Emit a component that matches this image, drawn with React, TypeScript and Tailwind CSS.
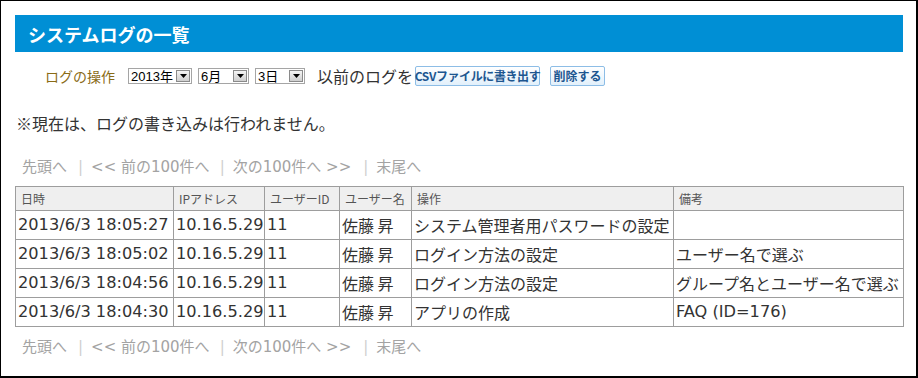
import React from "react";

const jp = { fontFamily: '"Noto Sans CJK JP", "Noto Sans", sans-serif' };
const mix = { fontFamily: '"DejaVu Sans", "Noto Sans CJK JP", sans-serif' };

function Select({ label, width }: { label: string; width: string }) {
  return (
    <div
      className={`flex h-[16px] items-center justify-between border border-[#a5a5a5] bg-white pl-[2px] pr-[1px] text-[13px] leading-none text-black ${width}`}
      style={{ fontFamily: '"Liberation Sans", "Noto Sans CJK JP", sans-serif' }}
    >
      <span>{label}</span>
      <div className="flex h-[12px] w-[14px] items-center justify-center border border-[#8a8a8a] bg-gradient-to-b from-[#f4f4f4] to-[#cfcfcf]">
        <svg width="7" height="4" viewBox="0 0 7 4">
          <polygon points="0,0 7,0 3.5,4" fill="#000" />
        </svg>
      </div>
    </div>
  );
}

function Pager() {
  return (
    <div className="flex h-[20px] items-center whitespace-pre pl-[7px] text-[15px] leading-none text-[#a3a3a3]" style={mix}>
      <span>先頭へ</span>
      <span className="ml-[11px] mr-[8px] text-[#cfcfcf]">|</span>
      <span>&lt;&lt; 前の100件へ</span>
      <span className="ml-[10px] mr-[8px] text-[#cfcfcf]">|</span>
      <span>次の100件へ &gt;&gt;</span>
      <span className="ml-[12px] mr-[8px] text-[#cfcfcf]">|</span>
      <span>末尾へ</span>
    </div>
  );
}

const rows = [
  ["2013/6/3 18:05:27", "10.16.5.29", "11", "佐藤 昇", "システム管理者用パスワードの設定", ""],
  ["2013/6/3 18:05:02", "10.16.5.29", "11", "佐藤 昇", "ログイン方法の設定", "ユーザー名で選ぶ"],
  ["2013/6/3 18:04:56", "10.16.5.29", "11", "佐藤 昇", "ログイン方法の設定", "グループ名とユーザー名で選ぶ"],
  ["2013/6/3 18:04:30", "10.16.5.29", "11", "佐藤 昇", "アプリの作成", "FAQ (ID=176)"],
];

const headers = ["日時", "IPアドレス", "ユーザーID", "ユーザー名", "操作", "備考"];
const widths = ["w-[158px]", "w-[91px]", "w-[75px]", "w-[72px]", "w-[262px]", "w-[230px]"];

export default function App() {
  return (
    <div
      className="h-[378px] w-[918px] border-b-2 border-l border-r-2 border-t border-black bg-white px-[14px] pt-[14px]"
      style={jp}
    >
      <div className="flex h-[37px] w-[888px] items-center bg-[#008fd5] pl-[13px] text-[18px] font-bold leading-none text-white">
        システムログの一覧
      </div>

      <div className="mt-[14px] flex h-[20px] items-center pl-[30px]">
        <span className="text-[14px] leading-none text-[#8a6b16]">ログの操作</span>
        <div className="ml-[13px] flex items-center gap-[6px]">
          <Select label="2013年" width="w-[64px]" />
          <Select label="6月" width="w-[51px]" />
          <Select label="3日" width="w-[50px]" />
        </div>
        <span className="ml-[12px] text-[16px] leading-none text-[#333]">以前のログを</span>
        <button className="ml-[2px] flex h-[20px] w-[125px] items-center justify-center whitespace-nowrap rounded-[2px] border border-[#8dbde6] bg-gradient-to-b from-white to-[#e2f0fb] px-0 text-[12px] font-bold leading-none tracking-[-0.4px] text-[#1d5690]">
          CSVファイルに書き出す
        </button>
        <button className="ml-[10px] flex h-[20px] w-[55px] items-center justify-center whitespace-nowrap rounded-[2px] border border-[#8dbde6] bg-gradient-to-b from-white to-[#e2f0fb] px-0 text-[12px] font-bold leading-none text-[#1d5690]">
          削除する
        </button>
      </div>

      <div className="mt-[26px] h-[22px] pl-[1px] text-[16px] leading-[22px] text-[#333]">
        ※現在は、ログの書き込みは行われません。
      </div>

      <div className="mt-[23px]">
        <Pager />
      </div>

      <table className="mt-[9px] w-[888px] table-fixed border-collapse">
        <thead>
          <tr className="h-[24px] bg-[#efefef]">
            {headers.map((h, i) => (
              <th
                key={h}
                className={`${widths[i]} border border-[#9d9d9d] pl-[5px] text-left text-[12px] font-normal leading-none text-[#555]`}
              >
                {h}
              </th>
            ))}
          </tr>
        </thead>
        <tbody>
          {rows.map((r, ri) => {
            return (
              <tr key={ri} className="h-[29px]">
                {r.map((c, ci) => {
                  const latin = ci < 3 || (ci === 5 && ri === 3);
                  return (
                    <td
                      key={ci}
                      className={`overflow-hidden whitespace-nowrap border border-[#9d9d9d] pl-[2px] leading-none text-[#333] ${
                        latin ? "text-[16.2px]" : "text-[16px]"
                      }`}
                      style={latin ? mix : undefined}
                    >
                      {c}
                    </td>
                  );
                })}
              </tr>
            );
          })}
        </tbody>
      </table>

      <div className="mt-[10px]">
        <Pager />
      </div>
    </div>
  );
}
